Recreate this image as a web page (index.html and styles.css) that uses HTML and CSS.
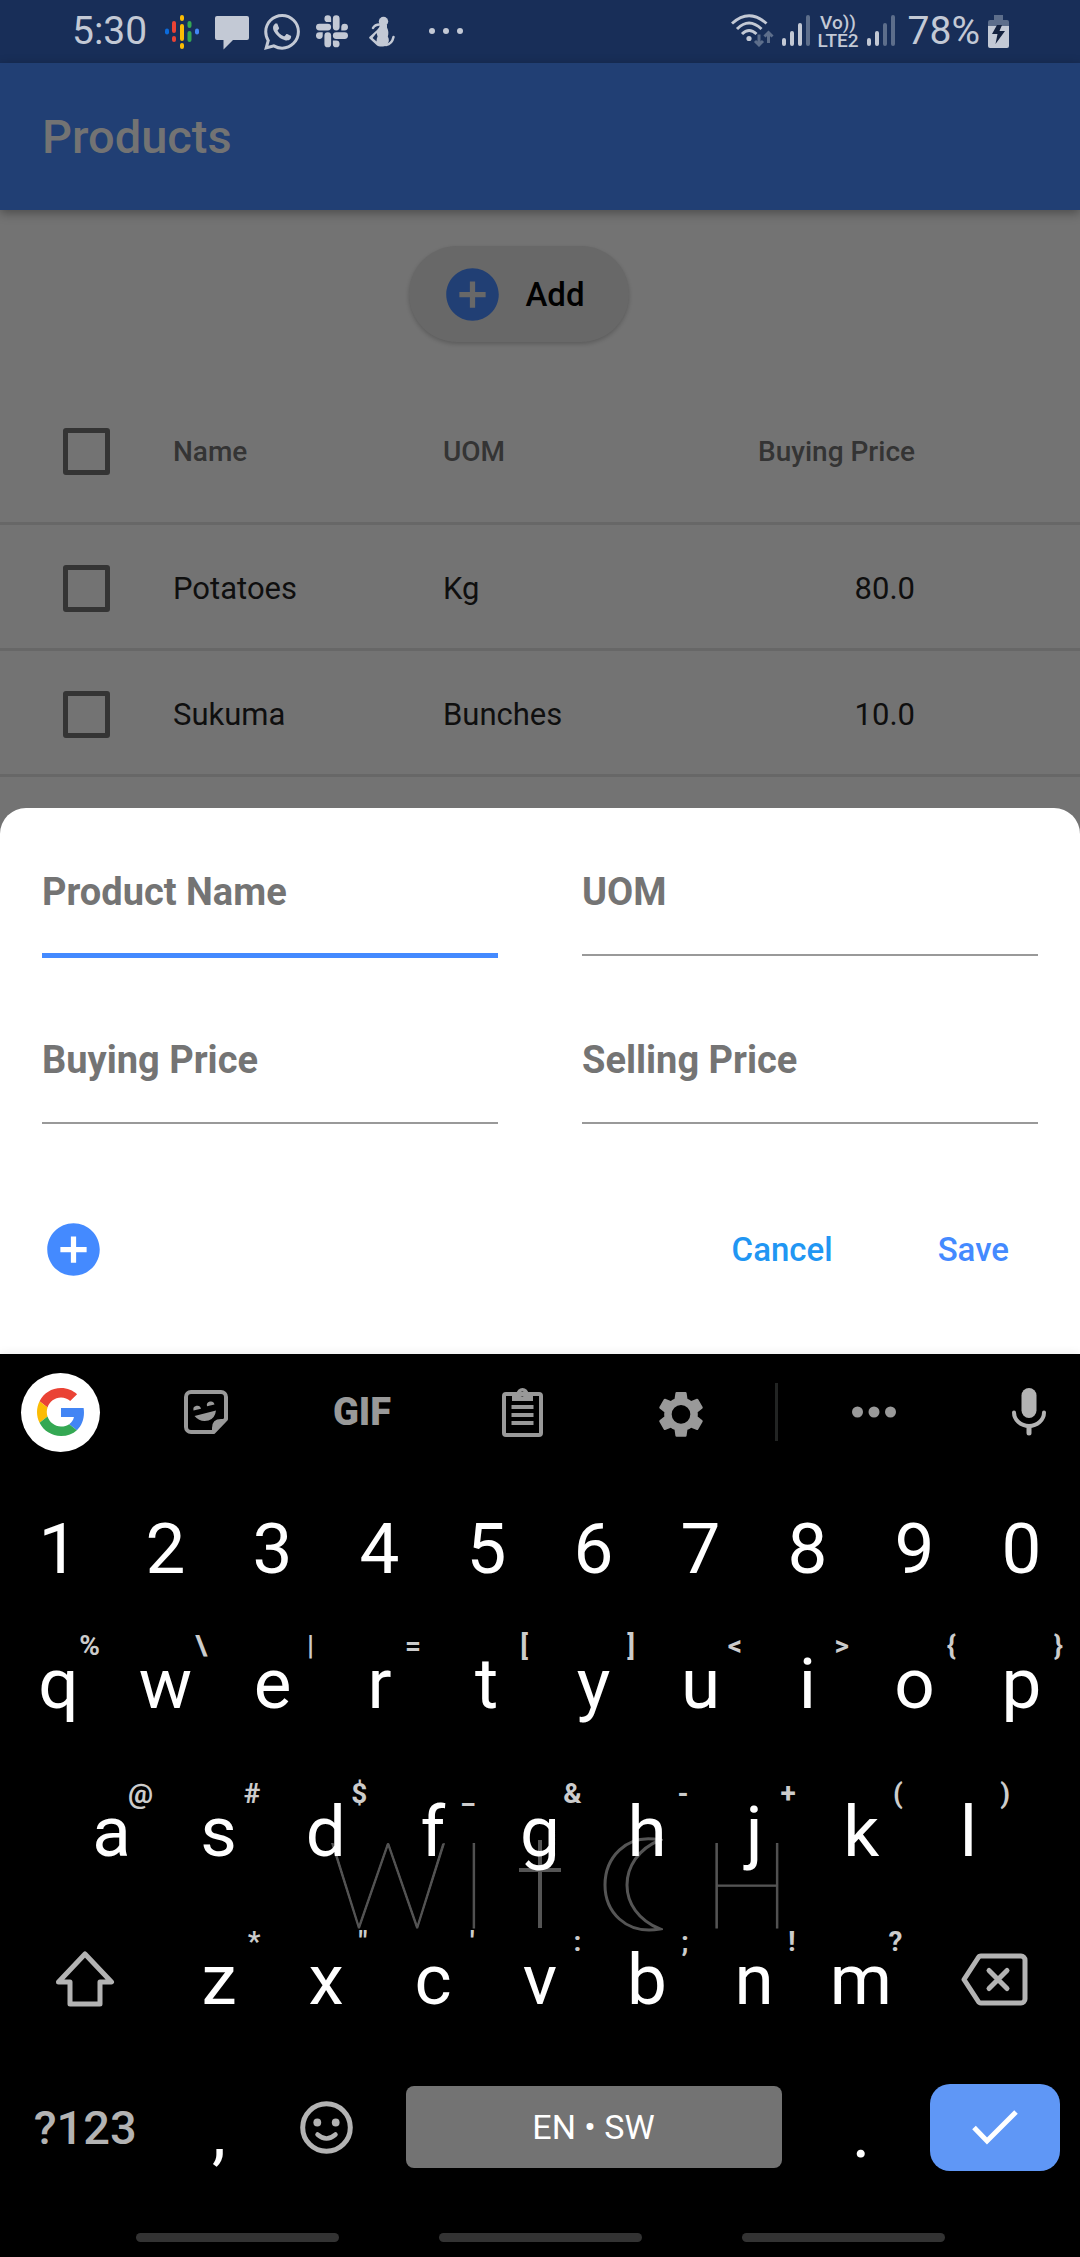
FILE: index.html
```html
<!DOCTYPE html>
<html lang="en">
<head>
<meta charset="utf-8">
<meta name="viewport" content="width=device-width, initial-scale=1">
<title>Products</title>
<link rel="stylesheet" href="styles.css">
</head>
<body>
<div class="screen">
  <header class="status-bar">
    <div class="status-left">
      <span class="status-text">5:30</span>
      <div class="status-icons">
        <svg class="status-icon" viewBox="0 0 36 36" aria-hidden="true">
          <g stroke-width="4" stroke-linecap="round">
            <path stroke="#0b6bdc" d="M3 16.500v2"/><path stroke="#ea4335" d="M10 9v8M10 24v2"/>
            <path stroke="#fbbc04" d="M18 3v2M18 12v13M18 31v2"/><path stroke="#34a853" d="M25.500 9v3M25.500 19v7"/>
            <path stroke="#4285f4" d="M33 16.500v2"/>
          </g>
        </svg>
        <svg class="status-icon" viewBox="0 0 36 36" aria-hidden="true"><path fill="currentColor" d="M3 2h30a2 2 0 0 1 2 2v20a2 2 0 0 1-2 2H19l-9.500 9.500V26H3a2 2 0 0 1-2-2V4a2 2 0 0 1 2-2z"/></svg>
        <svg class="status-icon" viewBox="0 0 24 24" aria-hidden="true"><path fill="currentColor" d="M17.472 14.382c-.297-.149-1.758-.867-2.03-.967-.273-.099-.471-.148-.67.15-.197.297-.767.966-.94 1.164-.173.199-.347.223-.644.075-.297-.15-1.255-.463-2.39-1.475-.883-.788-1.48-1.761-1.653-2.059-.173-.297-.018-.458.13-.606.134-.133.298-.347.446-.52.149-.174.198-.298.298-.497.099-.198.05-.371-.025-.52-.075-.149-.669-1.612-.916-2.207-.242-.579-.487-.5-.669-.51-.173-.008-.371-.01-.57-.01-.198 0-.52.074-.792.372-.272.297-1.04 1.016-1.04 2.479 0 1.462 1.065 2.875 1.213 3.074.149.198 2.096 3.2 5.077 4.487.709.306 1.262.489 1.694.625.712.227 1.36.195 1.871.118.571-.085 1.758-.719 2.006-1.413.248-.694.248-1.289.173-1.413-.074-.124-.272-.198-.57-.347m-5.421 7.403h-.004a9.87 9.87 0 01-5.031-1.378l-.361-.214-3.741.982.998-3.648-.235-.374a9.86 9.86 0 01-1.51-5.26c.001-5.45 4.436-9.884 9.888-9.884 2.64 0 5.122 1.03 6.988 2.898a9.825 9.825 0 012.893 6.994c-.003 5.45-4.437 9.884-9.885 9.884m8.413-18.297A11.815 11.815 0 0012.05 0C5.495 0 .16 5.335.157 11.892c0 2.096.547 4.142 1.588 5.945L.057 24l6.305-1.654a11.882 11.882 0 005.683 1.448h.005c6.554 0 11.89-5.335 11.893-11.893a11.821 11.821 0 00-3.48-8.413z"/></svg>
        <svg class="status-icon" viewBox="-1.500 -1 27 27" aria-hidden="true"><path fill="currentColor" d="M5.042 15.165a2.528 2.528 0 0 1-2.52 2.523A2.528 2.528 0 0 1 0 15.165a2.527 2.527 0 0 1 2.522-2.52h2.52v2.52zM6.313 15.165a2.527 2.527 0 0 1 2.521-2.52 2.527 2.527 0 0 1 2.521 2.52v6.313A2.528 2.528 0 0 1 8.834 24a2.528 2.528 0 0 1-2.521-2.522v-6.313zM8.834 5.042a2.528 2.528 0 0 1-2.521-2.52A2.528 2.528 0 0 1 8.834 0a2.528 2.528 0 0 1 2.521 2.522v2.52H8.834zM8.834 6.313a2.528 2.528 0 0 1 2.521 2.521 2.528 2.528 0 0 1-2.521 2.521H2.522A2.528 2.528 0 0 1 0 8.834a2.528 2.528 0 0 1 2.522-2.521h6.312zM18.956 8.834a2.528 2.528 0 0 1 2.522-2.521A2.528 2.528 0 0 1 24 8.834a2.528 2.528 0 0 1-2.522 2.521h-2.522V8.834zM17.688 8.834a2.528 2.528 0 0 1-2.523 2.521 2.527 2.527 0 0 1-2.52-2.521V2.522A2.527 2.527 0 0 1 15.165 0a2.528 2.528 0 0 1 2.523 2.522v6.312zM15.165 18.956a2.528 2.528 0 0 1 2.523 2.522A2.528 2.528 0 0 1 15.165 24a2.527 2.527 0 0 1-2.52-2.522v-2.522h2.52zM15.165 17.688a2.527 2.527 0 0 1-2.52-2.523 2.526 2.526 0 0 1 2.52-2.52h6.313A2.527 2.527 0 0 1 24 15.165a2.528 2.528 0 0 1-2.522 2.523h-6.313z"/></svg>
        <svg class="status-icon" viewBox="0 0 36 36" aria-hidden="true"><g transform="translate(5 3)"><circle cx="14.500" cy="4.500" r="4.700" fill="currentColor"/><path fill="currentColor" d="M11 8h7v2.500c1.500 3 1.800 6 .8 9 1.800 3 1.500 6-1.300 8.500-2 2-8 2-10 0L.5 21.500C0 21 0 20.300.6 19.800L8 13l2-2.500zM7.500 16L3.600 21l4 3.500c0-2 .2-3.500 1-5z" fill-rule="evenodd"/><path fill="none" stroke="currentColor" stroke-width="2.500" stroke-linecap="round" d="M4 11q2-4 8-3.500M17 28q6-1 7.500-8"/></g></svg>
        <svg class="status-more" viewBox="0 0 64 36" aria-hidden="true"><g fill="currentColor"><circle cx="18" cy="17" r="3"/><circle cx="32" cy="17" r="3"/><circle cx="46" cy="17" r="3"/></g></svg>
      </div>
    </div>
    <div class="status-right">
      <svg width="43" height="36" viewBox="0 0 43 36" aria-hidden="true">
        <g fill="none" stroke="currentColor" stroke-width="3"><path d="M1 9.500Q18 -6 35.500 9.500"/><path d="M6 15Q18 3 30.500 15"/><path d="M11 20Q18 13 25.500 20"/></g>
        <circle cx="18" cy="24.500" r="2.600" fill="currentColor"/>
        <path class="dim-stroke" d="M28 20.500v10M24 27l4 4 4-4M37.500 29V19M33.500 22.500l4-4 4 4"/>
      </svg>
      <svg width="28" height="36" viewBox="0 0 28 36" aria-hidden="true"><g stroke="currentColor" stroke-width="4" stroke-linecap="round"><path d="M2 26v4M10 19v11M18 11v19"/><path class="dim-bar" d="M26 3v27"/></g></svg>
      <span class="network"><span>Vo))</span><span>LTE2</span></span>
      <svg width="28" height="36" viewBox="0 0 28 36" aria-hidden="true"><g stroke="currentColor" stroke-width="4" stroke-linecap="round"><path d="M2 26v4M10 19v11"/><path class="dim-bar" d="M18 11v19M26 3v27"/></g></svg>
      <span class="status-text battery-text">78%</span>
      <svg width="21" height="36" viewBox="0 0 21 36" aria-hidden="true"><path class="dim-fill" d="M6 1h9v5h4a2 2 0 0 1 2 2v5H0V8a2 2 0 0 1 2-2h4z"/><path fill="currentColor" d="M0 12h21v20a2 2 0 0 1-2 2H2a2 2 0 0 1-2-2z"/><path fill="#14223f" d="M9 11h5l-2.500 6H17L7.500 30l2-10H4z"/></svg>
    </div>
  </header>

  <div class="app-bar"><h1>Products</h1></div>

  <main class="content">
    <div class="toolbar">
      <button class="add-button" type="button">
        <svg class="plus-icon" viewBox="0 0 24 24" aria-hidden="true"><path fill="currentColor" d="M12 2C6.480 2 2 6.480 2 12s4.480 10 10 10 10-4.480 10-10S17.520 2 12 2zm5 11h-4v4h-2v-4H7v-2h4V7h2v4h4v2z"/></svg>
        <span>Add</span>
      </button>
    </div>
    <table class="products">
      <colgroup><col class="col-check"><col class="col-name"><col class="col-uom"><col></colgroup>
      <thead>
        <tr><th><input class="check" type="checkbox" aria-label="Select all products"></th><th>Name</th><th>UOM</th><th class="price">Buying Price</th></tr>
      </thead>
      <tbody>
        <tr><td><input class="check" type="checkbox" aria-label="Select Potatoes"></td><td>Potatoes</td><td>Kg</td><td class="price">80.0</td></tr>
        <tr><td><input class="check" type="checkbox" aria-label="Select Sukuma"></td><td>Sukuma</td><td>Bunches</td><td class="price">10.0</td></tr>
      </tbody>
    </table>
  </main>

  <form class="sheet">
    <div class="fields">
      <div class="field active"><label for="product-name">Product Name</label><input id="product-name" type="text"></div>
      <div class="field"><label for="uom">UOM</label><input id="uom" type="text"></div>
      <div class="field"><label for="buying-price">Buying Price</label><input id="buying-price" type="text"></div>
      <div class="field"><label for="selling-price">Selling Price</label><input id="selling-price" type="text"></div>
    </div>
    <div class="actions">
      <button class="more-button" type="button" aria-label="Add another product">
        <svg class="plus-icon" viewBox="0 0 24 24" aria-hidden="true"><path fill="currentColor" d="M12 2C6.480 2 2 6.480 2 12s4.480 10 10 10 10-4.480 10-10S17.520 2 12 2zm5 11h-4v4h-2v-4H7v-2h4V7h2v4h4v2z"/></svg>
      </button>
      <button class="text-button cancel" type="button">Cancel</button>
      <button class="text-button save" type="button">Save</button>
    </div>
  </form>

  <section class="keyboard" aria-label="Keyboard">
    <div class="suggestions">
      <button class="google" type="button" aria-label="Google">
        <svg width="48" height="48" viewBox="0 0 48 48" aria-hidden="true"><path fill="#ea4335" d="M24 9.500c3.540 0 6.710 1.220 9.210 3.600l6.850-6.850C35.900 2.380 30.470 0 24 0 14.620 0 6.510 5.380 2.560 13.220l7.980 6.190C12.430 13.720 17.740 9.500 24 9.500z"/><path fill="#4285f4" d="M46.980 24.550c0-1.570-.15-3.090-.38-4.550H24v9.020h12.940c-.58 2.960-2.260 5.480-4.780 7.180l7.730 6c4.510-4.180 7.090-10.360 7.090-17.650z"/><path fill="#fbbc05" d="M10.530 28.590c-.48-1.450-.76-2.990-.76-4.590s.27-3.140.76-4.590l-7.980-6.190C.92 16.460 0 20.120 0 24c0 3.880.92 7.540 2.560 10.780l7.970-6.190z"/><path fill="#34a853" d="M24 48c6.480 0 11.930-2.130 15.890-5.810l-7.730-6c-2.150 1.450-4.920 2.300-8.160 2.300-6.260 0-11.570-4.220-13.470-9.910l-7.980 6.190C6.510 42.620 14.620 48 24 48z"/></svg>
      </button>
      <button type="button" aria-label="Stickers">
        <svg width="44" height="44" viewBox="0 0 44 44" aria-hidden="true"><path fill="none" stroke="currentColor" stroke-width="4" stroke-linejoin="round" d="M7 2h30a5 5 0 0 1 5 5v22L29.500 42H7a5 5 0 0 1-5-5V7a5 5 0 0 1 5-5z"/><path fill="currentColor" d="M43 29h-6q-9 0-9 9v5h2zM9.500 20.500a3.800 3.800 0 1 1 7.500-1.800zM23 16.300a3.800 3.800 0 1 1 7.500-1.900zM10.500 26L32 20.500Q31 28.500 24.500 30.500 16 32.500 10.500 26z"/></svg>
      </button>
      <button class="gif" type="button">GIF</button>
      <button type="button" aria-label="Clipboard">
        <svg width="41" height="50" viewBox="0 0 41 50" aria-hidden="true"><rect x="2" y="7" width="37" height="41" rx="2" fill="none" stroke="currentColor" stroke-width="4"/><path fill="currentColor" fill-rule="evenodd" d="M10 7h4.500a6 6 0 0 1 12 0H31v7H10zM20.500 4.500a2.500 2.500 0 1 0 0 5 2.500 2.500 0 0 0 0-5zM9.500 18h22v4h-22zM9.500 26h22v4h-22zM9.500 34h22v4h-22z"/></svg>
      </button>
      <button type="button" aria-label="Settings">
        <svg width="56" height="56" viewBox="0 -1 24 24" aria-hidden="true"><path fill="currentColor" fill-rule="evenodd" d="M19.140 12.940c.04-.3.06-.61.06-.94 0-.32-.02-.64-.07-.94l2.030-1.580c.18-.14.23-.41.12-.61l-1.920-3.320c-.12-.22-.37-.29-.59-.22l-2.390.96c-.5-.38-1.030-.7-1.620-.94l-.36-2.540c-.04-.24-.24-.41-.48-.41h-3.840c-.24 0-.43.17-.47.41l-.36 2.540c-.59.24-1.130.57-1.620.94l-2.390-.96c-.22-.08-.47 0-.59.22L2.740 8.870c-.12.21-.08.47.12.61l2.030 1.580c-.05.3-.09.63-.09.94s.02.64.07.94l-2.030 1.580c-.18.14-.23.41-.12.61l1.920 3.320c.12.22.37.29.59.22l2.390-.96c.5.38 1.030.7 1.620.94l.36 2.540c.05.24.24.41.48.41h3.840c.24 0 .44-.17.47-.41l.36-2.540c.59-.24 1.130-.56 1.620-.94l2.390.96c.22.08.47 0 .59-.22l1.920-3.320c.12-.22.07-.47-.12-.61zM12 16a4 4 0 1 1 0-8 4 4 0 0 1 0 8z"/></svg>
      </button>
      <span class="divider"></span>
      <button type="button" aria-label="More"><svg width="44" height="12" viewBox="0 0 44 12" aria-hidden="true"><g fill="currentColor"><circle cx="5.500" cy="6" r="5.500"/><circle cx="22" cy="6" r="5.500"/><circle cx="38.500" cy="6" r="5.500"/></g></svg></button>
      <button class="mic" type="button" aria-label="Voice input"><svg width="34" height="48" viewBox="0 0 34 48" aria-hidden="true"><rect x="9.500" y="0" width="15" height="30" rx="7.500" fill="currentColor"/><path fill="none" stroke="currentColor" stroke-width="4" stroke-linecap="round" d="M2 24.500a15 13.500 0 0 0 30 0"/><path fill="none" stroke="currentColor" stroke-width="5" stroke-linecap="round" d="M17 39v6"/></svg></button>
    </div>

    <div class="keys">
      <div class="watermark" aria-hidden="true">
        <span>W</span><span>I</span>
        <svg width="44" height="96" viewBox="0 0 44 96"><path fill="none" stroke="currentColor" stroke-width="4" d="M22 3v88M1 33h42"/></svg>
        <svg width="60" height="96" viewBox="0 0 60 96"><path fill="none" stroke="currentColor" stroke-width="3" d="M57 3C22 -4 2 22 2 48s20 50 55 44C35 83 24 66 24 48S35 12 57 3z"/></svg>
        <span>H</span>
      </div>
      <div class="key-row digits">
        <button type="button">1</button><button type="button">2</button><button type="button">3</button><button type="button">4</button><button type="button">5</button><button type="button">6</button><button type="button">7</button><button type="button">8</button><button type="button">9</button><button type="button">0</button>
      </div>
      <div class="key-row">
        <button type="button">q<span class="hint">%</span></button><button type="button">w<span class="hint">\</span></button><button type="button">e<span class="hint">|</span></button><button type="button">r<span class="hint">=</span></button><button type="button">t<span class="hint">[</span></button><button type="button">y<span class="hint">]</span></button><button type="button">u<span class="hint">&lt;</span></button><button type="button">i<span class="hint">&gt;</span></button><button type="button">o<span class="hint">{</span></button><button type="button">p<span class="hint">}</span></button>
      </div>
      <div class="key-row home">
        <button type="button">a<span class="hint">@</span></button><button type="button">s<span class="hint">#</span></button><button type="button">d<span class="hint">$</span></button><button type="button">f<span class="hint">_</span></button><button type="button">g<span class="hint">&amp;</span></button><button type="button">h<span class="hint">-</span></button><button type="button">j<span class="hint">+</span></button><button type="button">k<span class="hint">(</span></button><button type="button">l<span class="hint">)</span></button>
      </div>
      <div class="key-row lower">
        <button class="function" type="button" aria-label="Shift"><svg width="60" height="58" viewBox="0 0 60 58" aria-hidden="true"><path fill="none" stroke="currentColor" stroke-width="5" stroke-linejoin="round" d="M30 4l26.500 28H45v22H15V32H3.500z"/></svg></button>
        <button type="button">z<span class="hint">*</span></button><button type="button">x<span class="hint">"</span></button><button type="button">c<span class="hint">'</span></button><button type="button">v<span class="hint">:</span></button><button type="button">b<span class="hint">;</span></button><button type="button">n<span class="hint">!</span></button><button type="button">m<span class="hint">?</span></button>
        <button class="function" type="button" aria-label="Backspace"><svg width="67" height="53" viewBox="0 0 67 53" aria-hidden="true"><path fill="none" stroke="currentColor" stroke-width="5" stroke-linejoin="round" d="M20 3h40a4 4 0 0 1 4 4v39a4 4 0 0 1-4 4H20q-2 0-3-2L3 26.500 17 5q1-2 3-2z"/><path fill="none" stroke="currentColor" stroke-width="5" stroke-linecap="round" d="M28 17.500l18 18M46 17.500l-18 18"/></svg></button>
      </div>
      <div class="key-row bottom">
        <button class="function symbols" type="button">?123</button>
        <button class="punctuation" type="button">,</button>
        <button class="function" type="button" aria-label="Emoji"><svg width="53" height="53" viewBox="0 0 53 53" aria-hidden="true"><circle cx="26.500" cy="26.500" r="23.800" fill="none" stroke="currentColor" stroke-width="5"/><circle cx="17.300" cy="21.500" r="3.900" fill="currentColor"/><circle cx="35.700" cy="21.500" r="3.900" fill="currentColor"/><path fill="none" stroke="currentColor" stroke-width="4.500" stroke-linecap="round" d="M17.500 33.500q9 8 18 0"/></svg></button>
        <button class="space" type="button">EN • SW</button>
        <button class="punctuation" type="button">.</button>
        <button class="enter" type="button" aria-label="Done"><svg width="48" height="36" viewBox="0 0 48 36" aria-hidden="true"><path fill="none" stroke="currentColor" stroke-width="5" d="M3 18.500l13 13.500L45 3"/></svg></button>
      </div>
    </div>
  </section>

  <nav class="nav-hints" aria-label="System navigation">
    <button type="button" aria-label="Recent apps"></button><button type="button" aria-label="Home"></button><button type="button" aria-label="Back"></button>
  </nav>
</div>
</body>
</html>
```
FILE: styles.css
```css
* { box-sizing: border-box; }

body {
  margin: 0;
  background: #000;
  font-family: Roboto, "Liberation Sans", sans-serif;
}

button {
  margin: 0;
  padding: 0;
  border: 0;
  background: none;
  color: inherit;
  font: inherit;
}

svg { display: block; flex: none; }

.screen { display: flex; flex-direction: column; }

/* Status bar */
.status-bar {
  display: flex;
  justify-content: space-between;
  height: 63px;
  padding: 0 71px 0 72px;
  background: #182e58;
  color: #c3c9d5;
}
.status-left, .status-right, .status-icons { display: flex; align-items: center; }
.status-left { gap: 17px; }
.status-icons { gap: 14px; }
.status-right { gap: 8px; }
.status-text { font-size: 39px; line-height: 63px; }
.battery-text { margin-left: 5px; }
.status-icon { width: 36px; height: 36px; }
.status-more { width: 64px; height: 36px; }
.network { display: flex; flex-direction: column; align-items: center; font-size: 19px; font-weight: 500; line-height: 18px; }
.dim-stroke { fill: none; stroke: #5d6e8b; stroke-width: 3; }
.dim-bar { stroke: #5d6e8b; }
.dim-fill { fill: #5d6e8b; }

/* App bar */
.app-bar {
  display: flex;
  align-items: center;
  position: relative;
  height: 147px;
  padding: 0 42px;
  background: #213f74;
  box-shadow: 0 3px 10px rgba(0, 0, 0, .35);
}
.app-bar h1 { margin: 0; color: #737373; font-size: 47px; font-weight: 500; line-height: 60px; }

/* Product list behind the sheet */
.content { padding: 36px 0 31px; background: #737373; }
.toolbar { display: flex; justify-content: center; margin-bottom: 36px; padding-right: 42px; }
.add-button {
  display: flex;
  align-items: center;
  gap: 21px;
  height: 96px;
  padding: 0 44px 0 32px;
  border-radius: 48px;
  background: #686868;
  box-shadow: 0 2px 4px rgba(0, 0, 0, .2);
  color: #000;
  font-size: 33px;
  font-weight: 500;
}
.plus-icon { width: 63px; height: 63px; }
.add-button .plus-icon { color: #213f74; }

.products { width: 100%; border-spacing: 0; table-layout: fixed; }
.col-check { width: 173px; }
.col-name { width: 270px; }
.col-uom { width: 270px; }
.products th, .products td {
  height: 126px;
  padding: 3px 0 0;
  border-bottom: 3px solid #676767;
  text-align: left;
}
.products th { height: 147px; color: #343434; font-size: 28px; font-weight: 500; }
.products td { color: #0f0f0f; font-size: 31px; }
.products .price { padding-right: 165px; text-align: right; }
.check {
  display: block;
  width: 47px;
  height: 47px;
  margin: 0 auto;
  border: 5px solid #343434;
  border-radius: 3px;
  appearance: none;
}

/* Entry sheet */
.sheet {
  padding: 60px 0 42px;
  border-radius: 26px 26px 0 0;
  background: #fff;
  box-shadow: 0 -26px 0 26px #737373;
  clip-path: inset(0);
}
.fields { display: grid; grid-template-columns: 1fr 1fr; gap: 78px 84px; padding: 0 42px; }
.field { display: flex; flex-direction: column; }
.field label { color: #747474; font-size: 38px; font-weight: 700; line-height: 48px; }
.field input {
  width: 100%;
  height: 40px;
  margin: 0 0 2px;
  padding: 0;
  border: 0;
  border-bottom: 2px solid #999;
  background: none;
  font: inherit;
  outline: none;
}
.field.active input { height: 42px; margin: 0; border-bottom: 5px solid #448aff; }
.actions { display: flex; align-items: center; gap: 21px; height: 126px; margin-top: 60px; padding: 0 29px 0 42px; }
.more-button { margin-right: auto; color: #448aff; }
.text-button { height: 96px; padding: 0 42px; font-size: 33px; font-weight: 500; }
.cancel { color: #2196f3; }
.save { color: #448aff; }

/* Keyboard */
.keyboard {
  position: relative;
  background: #000;
  box-shadow: 0 -2px 8px rgba(0, 0, 0, .06);
  color: #fff;
}
.suggestions {
  display: grid;
  grid-template-columns: 121fr 169fr 144fr 176fr 142fr 48fr 148fr 132fr;
  align-items: center;
  justify-items: center;
  height: 116px;
  margin-bottom: 17px;
  color: #999;
}
.google {
  display: grid;
  place-items: center;
  width: 79px;
  height: 79px;
  border-radius: 50%;
  background: #fff;
}
.gif { font-size: 38px; font-weight: 900; }
.divider { width: 3px; height: 58px; background: #222423; }
.mic { justify-self: end; margin-right: 34px; color: #b3b3b3; }

.keys { position: relative; }
.key-row {
  position: relative;
  display: grid;
  grid-template-columns: repeat(10, 1fr);
  height: 148px;
  padding: 0 5px;
  font-size: 71px;
}
.key-row button { position: relative; display: flex; align-items: center; justify-content: center; }
.digits { height: 122px; }
.home { grid-template-columns: repeat(9, 1fr); padding: 0 58px; }
.lower { grid-template-columns: 3fr repeat(7, 2fr) 3fr; }
.bottom { grid-template-columns: 3fr 2fr 2fr 8fr 2fr 3fr; align-items: center; }
.hint {
  position: absolute;
  top: 21px;
  right: 12px;
  color: #ccc;
  font-size: 28px;
  font-weight: 700;
  line-height: 32px;
}
.key-row .function { color: #b3b3b3; }
.key-row .symbols { font-size: 47px; font-weight: 500; }
.key-row .punctuation { padding-top: 10px; }
.key-row .space { height: 82px; margin: 0 26px; border-radius: 8px; background: #737373; font-size: 34px; }
.key-row .enter { height: 87px; margin: 0 15px; border-radius: 20px; background: #5f97f6; }

.watermark {
  position: absolute;
  inset: 345px 0 auto;
  display: grid;
  grid-template-columns: 116px 56px 76px 110px 118px;
  align-items: center;
  justify-content: center;
  justify-items: center;
  height: 100px;
  padding-left: 56px;
  color: #555;
  font-family: Lato, sans-serif;
  font-size: 120px;
  font-weight: 100;
  line-height: 100px;
}
.watermark span { padding-bottom: 6px; -webkit-text-stroke: 1px #555; }

/* System navigation */
.nav-hints { display: flex; justify-content: center; gap: 100px; height: 56px; padding-top: 32px; }
.nav-hints button { width: 203px; height: 9px; border-radius: 5px; background: #333; }
```
